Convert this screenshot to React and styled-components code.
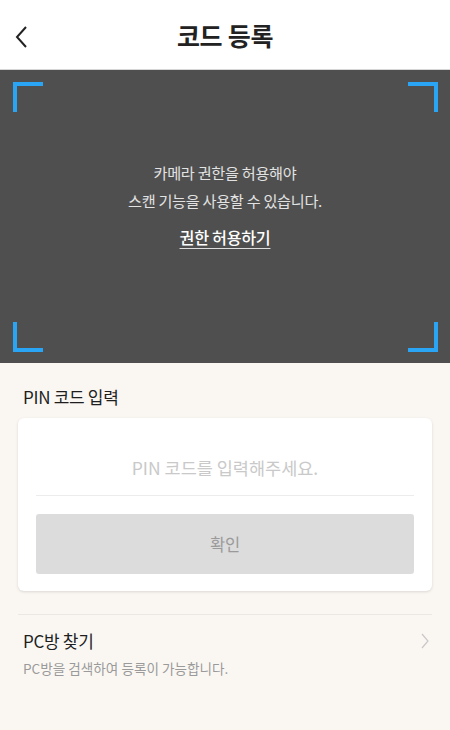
import React from "react";
import styled, { createGlobalStyle } from "styled-components";

const GlobalStyle = createGlobalStyle`
  html, body {
    margin: 0;
    padding: 0;
    background: #faf7f3;
  }
  * {
    box-sizing: border-box;
  }
  body {
    font-family: "Noto Sans CJK KR", "Noto Sans", sans-serif;
  }
`;

const Page = styled.div`
  width: 450px;
  min-height: 730px;
  display: flex;
  flex-direction: column;
  background: #faf7f3;
`;

const Header = styled.header`
  height: 70px;
  display: flex;
  align-items: center;
  justify-content: center;
  position: relative;
  background: #fff;
  border-bottom: 1px solid #d6d6d6;
`;

const BackButton = styled.button`
  position: absolute;
  left: 8px;
  top: 20px;
  width: 28px;
  height: 34px;
  border: none;
  background: none;
  padding: 0;
  display: flex;
  align-items: center;
  justify-content: center;
`;

const Title = styled.h1`
  margin: 0;
  font-size: 25px;
  font-weight: 700;
  color: #222;
  letter-spacing: -0.3px;
`;

const Scanner = styled.section`
  height: 293px;
  background: #4f4f4f;
  position: relative;
  display: flex;
  flex-direction: column;
  align-items: center;
  justify-content: center;
  padding-bottom: 26px;
`;

const Corner = styled.span`
  position: absolute;
  width: 30px;
  height: 30px;
  border-color: #2aa4f4;
  border-style: solid;
  border-width: 0;
  ${(p) => (p.$top ? "top: 12px; border-top-width: 4px;" : "bottom: 11px; border-bottom-width: 4px;")}
  ${(p) => (p.$left ? "left: 13px; border-left-width: 4px;" : "right: 12px; border-right-width: 4px;")}
`;

const Message = styled.p`
  margin: 0;
  font-size: 15.2px;
  line-height: 28px;
  color: #e2e2e2;
  text-align: center;
  letter-spacing: -0.3px;
`;

const PermissionLink = styled.a`
  margin-top: 11px;
  font-size: 16.2px;
  font-weight: 500;
  color: #fff;
  text-decoration: underline;
  text-underline-offset: 4px;
  text-decoration-color: #ddd;
  letter-spacing: -0.3px;
  cursor: pointer;
`;

const Section = styled.section`
  padding: 0 18px;
  display: flex;
  flex-direction: column;
`;

const SectionTitle = styled.h2`
  margin: 22px 0 0 5px;
  font-size: 17px;
  font-weight: 400;
  color: #1e1e1e;
  letter-spacing: -0.3px;
  line-height: 24px;
`;

const Card = styled.div`
  margin-top: 9px;
  background: #fff;
  border-radius: 6px;
  box-shadow: 0 1px 3px rgba(0, 0, 0, 0.13);
  padding: 26px 18px 17px;
  display: flex;
  flex-direction: column;
`;

const PinInput = styled.input`
  border: none;
  border-bottom: 1px solid #ececec;
  height: 52px;
  padding: 0 0 5px;
  font-family: inherit;
  font-size: 17.5px;
  text-align: center;
  color: #333;
  background: transparent;
  outline: none;
  &::placeholder {
    color: #c9c9c9;
  }
`;

const ConfirmButton = styled.button`
  margin-top: 18px;
  height: 60px;
  border: none;
  border-radius: 3px;
  background: #dcdcdc;
  color: #9a9a9a;
  font-family: inherit;
  font-size: 16.5px;
  letter-spacing: -0.3px;
`;

const Divider = styled.hr`
  margin: 23px 0 0;
  border: none;
  border-top: 1px solid #ebe8e3;
`;

const FindRow = styled.div`
  display: flex;
  align-items: flex-start;
  justify-content: space-between;
  padding: 13px 2px 0 5px;
`;

const FindText = styled.div`
  display: flex;
  flex-direction: column;
`;

const FindTitle = styled.span`
  font-size: 17px;
  color: #1e1e1e;
  line-height: 26px;
  letter-spacing: -0.3px;
`;

const FindDesc = styled.span`
  margin-top: 4px;
  font-size: 13.6px;
  color: #9a9a9a;
`;

const Chevron = styled.span`
  margin-top: 4px;
  display: flex;
`;

export default function App() {
  return (
    <Page>
      <GlobalStyle />
      <Header>
        <BackButton aria-label="back">
          <svg width="16" height="24" viewBox="0 0 16 24" fill="none">
            <path d="M12 2 L3 12 L12 22" stroke="#222" strokeWidth="2" />
          </svg>
        </BackButton>
        <Title>코드 등록</Title>
      </Header>

      <Scanner>
        <Corner $top $left />
        <Corner $top />
        <Corner $left />
        <Corner />
        <Message>
          카메라 권한을 허용해야
          <br />
          스캔 기능을 사용할 수 있습니다.
        </Message>
        <PermissionLink>권한 허용하기</PermissionLink>
      </Scanner>

      <Section>
        <SectionTitle>PIN 코드 입력</SectionTitle>
        <Card>
          <PinInput placeholder="PIN 코드를 입력해주세요." />
          <ConfirmButton>확인</ConfirmButton>
        </Card>
        <Divider />
        <FindRow>
          <FindText>
            <FindTitle>PC방 찾기</FindTitle>
            <FindDesc>PC방을 검색하여 등록이 가능합니다.</FindDesc>
          </FindText>
          <Chevron>
            <svg width="10" height="18" viewBox="0 0 10 18" fill="none">
              <path d="M2 2 L8 9 L2 16" stroke="#c8c8c8" strokeWidth="1.2" />
            </svg>
          </Chevron>
        </FindRow>
      </Section>
    </Page>
  );
}
